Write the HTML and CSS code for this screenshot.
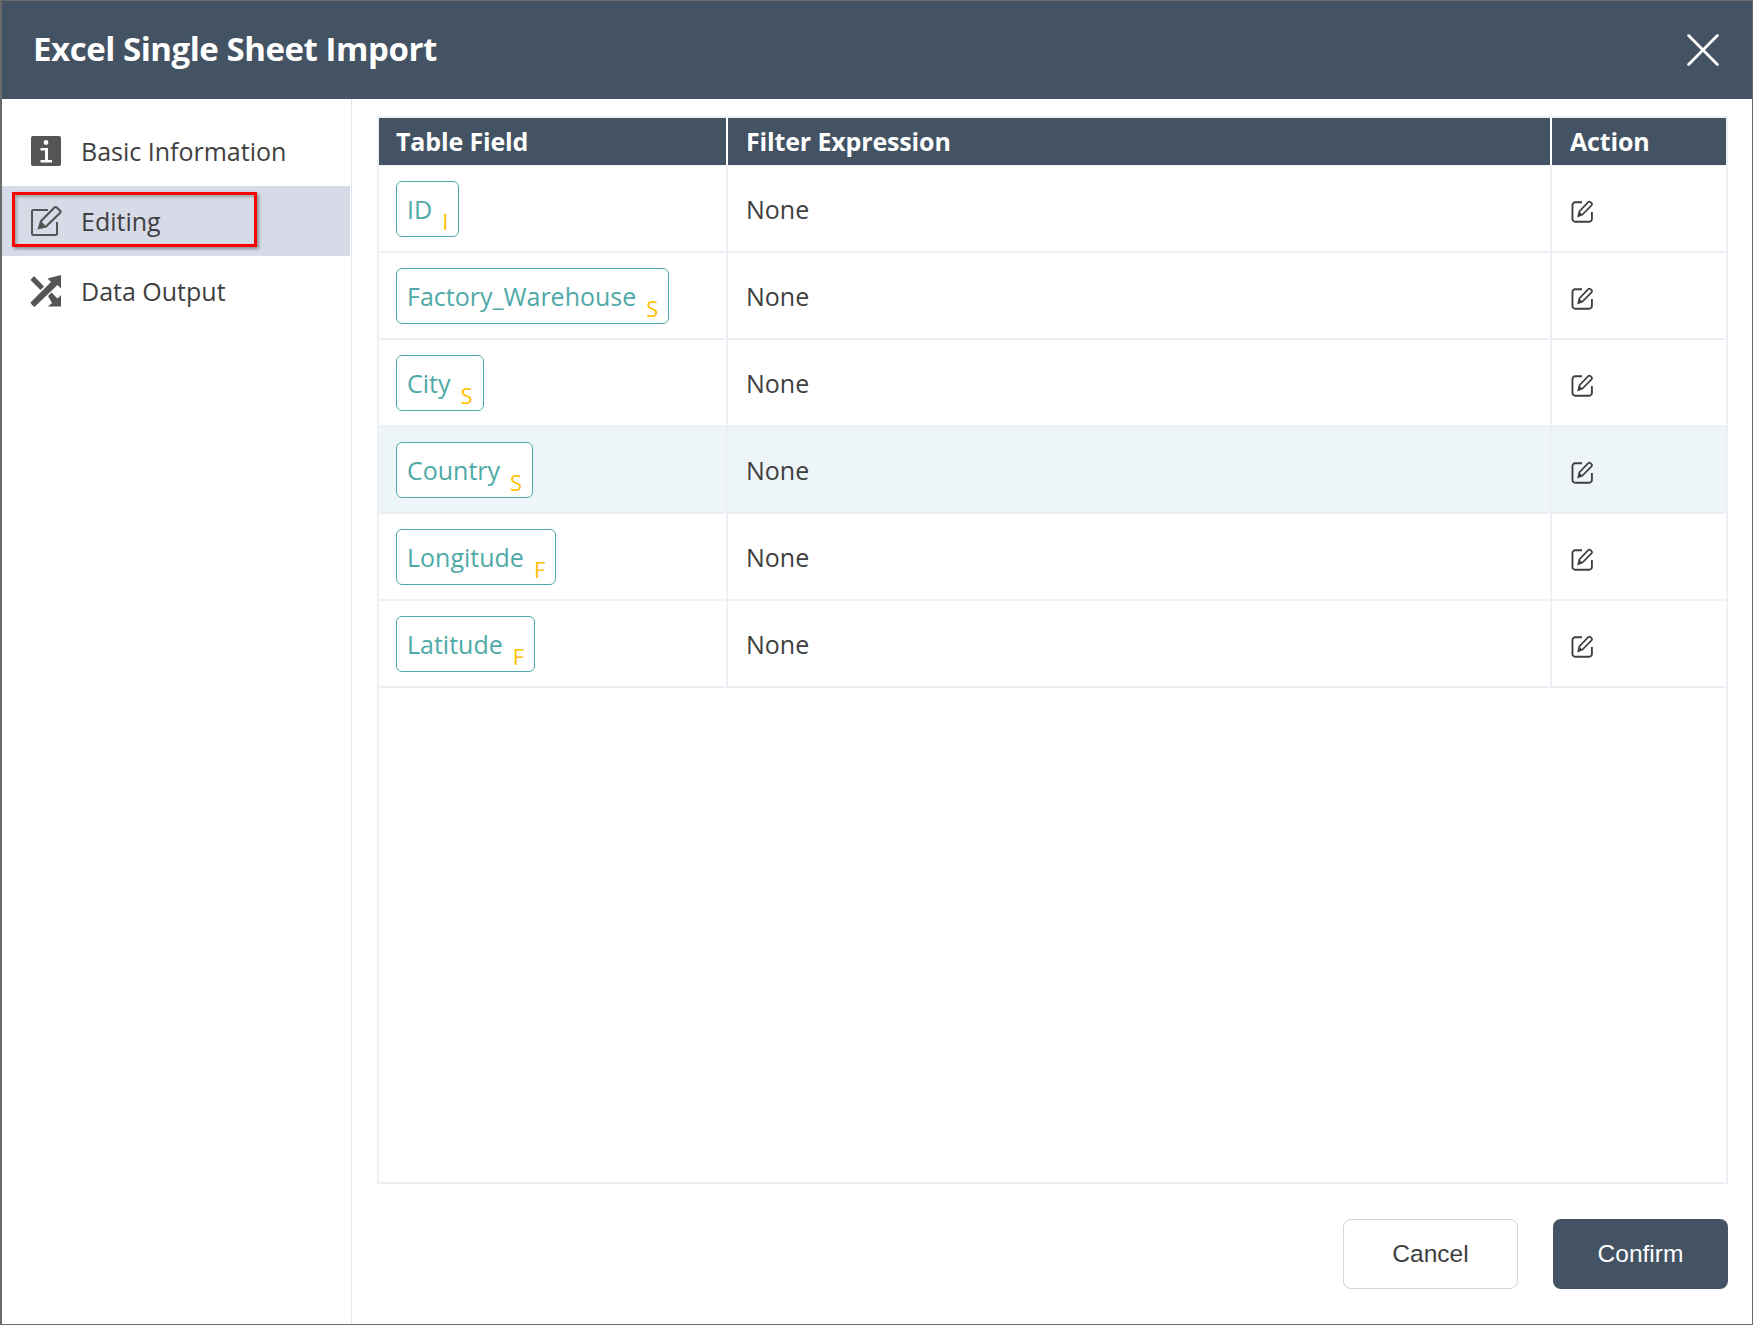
FILE: index.html
```html
<!DOCTYPE html>
<html lang="en">
<head>
    <meta charset="UTF-8">
    <title>Excel Single Sheet Import</title>
    <link rel="stylesheet" href="styles.css">
</head>
<body>
    <div class="dialog">
        <div class="dialog-header">
            <h1>Excel Single Sheet Import</h1>
            <svg class="close-icon" viewBox="0 0 30 30"><path d="M1.5 1.5L28.5 28.5M28.5 1.5L1.5 28.5"/></svg>
        </div>
        <div class="dialog-body">
            <!-- left menu -->
            <div class="sidebar">
                <div class="menu-item">
                    <svg class="menu-icon" viewBox="0 0 32 32"><rect x="1" y="1" width="30" height="30" rx="2" fill="#555"/><circle cx="16" cy="7.5" r="2.4" fill="#fff"/><path d="M10.5 13h7.5v12h4v2.6H10.5V25h4.500v-9.400h-4.500z" fill="#fff"/></svg>
                    <span>Basic Information</span>
                </div>
                <div class="menu-item active">
                    <svg class="menu-icon" viewBox="0 0 32 32"><path d="M18 5H3.500A1.500 1.500 0 0 0 2 6.500v22A1.500 1.500 0 0 0 3.500 30h22a1.500 1.500 0 0 0 1.500-1.500V17" fill="none" stroke="#555" stroke-width="2"/><path d="M9 23l2-7L24.500 2.500a1.600 1.600 0 0 1 2.300 0l3.200 3.200a1.600 1.600 0 0 1 0 2.300L16 21.500z" fill="none" stroke="#555" stroke-width="2.200"/><path d="M9 23l2-7 5 5.500z" fill="#555"/></svg>
                    <span>Editing</span>
                    <div class="highlight-box"></div>
                </div>
                <div class="menu-item">
                    <svg class="menu-icon" viewBox="0 0 32 32"><path d="M2 31l-1.500-2.500L21 8l-3.500-3.500L31 1v13.500L27.500 11 4.500 33z" fill="#555" transform="translate(0 -1)"/><path d="M4 1L.5 5l10 10 3.500-3.500zM18 21l3.500-3.500 6 6L31 20v11.500H18l4-3.500z" fill="#555"/></svg>
                    <span>Data Output</span>
                </div>
            </div>
            <div class="content">
                <div class="table-wrap">
                    <div class="table-row table-head">
                        <div class="col col-field">Table Field</div>
                        <div class="col col-filter">Filter Expression</div>
                        <div class="col col-action">Action</div>
                    </div>
                    <div class="table-row">
                        <div class="col col-field"><span class="tag">ID<sub>I</sub></span></div>
                        <div class="col col-filter">None</div>
                        <div class="col col-action"><svg class="edit-icon" viewBox="0 0 22 22"><use href="#edit"/></svg></div>
                    </div>
                    <div class="table-row">
                        <div class="col col-field"><span class="tag">Factory_Warehouse<sub>S</sub></span></div>
                        <div class="col col-filter">None</div>
                        <div class="col col-action"><svg class="edit-icon" viewBox="0 0 22 22"><use href="#edit"/></svg></div>
                    </div>
                    <div class="table-row">
                        <div class="col col-field"><span class="tag">City<sub>S</sub></span></div>
                        <div class="col col-filter">None</div>
                        <div class="col col-action"><svg class="edit-icon" viewBox="0 0 22 22"><use href="#edit"/></svg></div>
                    </div>
                    <div class="table-row hover">
                        <div class="col col-field"><span class="tag">Country<sub>S</sub></span></div>
                        <div class="col col-filter">None</div>
                        <div class="col col-action"><svg class="edit-icon" viewBox="0 0 22 22"><use href="#edit"/></svg></div>
                    </div>
                    <div class="table-row">
                        <div class="col col-field"><span class="tag">Longitude<sub>F</sub></span></div>
                        <div class="col col-filter">None</div>
                        <div class="col col-action"><svg class="edit-icon" viewBox="0 0 22 22"><use href="#edit"/></svg></div>
                    </div>
                    <div class="table-row">
                        <div class="col col-field"><span class="tag">Latitude<sub>F</sub></span></div>
                        <div class="col col-filter">None</div>
                        <div class="col col-action"><svg class="edit-icon" viewBox="0 0 22 22"><use href="#edit"/></svg></div>
                    </div>
                </div>
                <div class="footer">
                    <button class="btn btn-cancel">Cancel</button>
                    <button class="btn btn-confirm">Confirm</button>
                </div>
            </div>
        </div>
    </div>

    <svg class="icon-defs" width="0" height="0">
        <symbol id="edit" viewBox="0 0 22 22">
            <path d="M10.500 2.200H4A2.600 2.600 0 0 0 1.400 4.800v13.400a2.600 2.600 0 0 0 2.600 2.600h13.400a2.600 2.600 0 0 0 2.600-2.600V11.500" fill="none" stroke="#3f3f3f" stroke-width="1.800"/>
            <path d="M7 15.500l1-4.500L16.500 2a1.500 1.500 0 0 1 2.100 0l1 1a1.500 1.500 0 0 1 0 2.100L11 14z" fill="none" stroke="#3f3f3f" stroke-width="1.600"/>
            <path d="M7 15.500l1-4.500 3 3z" fill="#3f3f3f"/>
        </symbol>
    </svg>
</body>
</html>
```

FILE: styles.css
```css
* {
    margin: 0;
    padding: 0;
    box-sizing: border-box;
}

html, body {
    height: 100%;
}

body {
    font-family: "Open Sans", "Noto Sans", sans-serif;
    background: #6b6b6b;
    padding: 1px 1px 1px 2px;
    overflow: hidden;
}

.dialog {
    height: 100%;
    background: #fff;
    display: flex;
    flex-direction: column;
}

.dialog-header {
    height: 98px;
    flex-shrink: 0;
    background: #435364;
    color: #fff;
    display: flex;
    align-items: center;
    justify-content: space-between;
    padding: 0 33px 4px 31px;
}

.dialog-header h1 {
    font-size: 33px;
    font-weight: 700;
    letter-spacing: -0.45px;
}

.close-icon {
    width: 32px;
    height: 32px;
    margin-top: 4px;
}

.close-icon path {
    stroke: #fff;
    stroke-width: 2.6;
    stroke-linecap: round;
    fill: none;
}

.dialog-body {
    flex: 1;
    display: flex;
    min-height: 0;
}

.sidebar {
    width: 350px;
    flex-shrink: 0;
    border-right: 1px solid #e3e6ee;
    padding-top: 17px;
}

.menu-item {
    position: relative;
    height: 70px;
    width: 348px;
    display: flex;
    align-items: center;
    padding-left: 28px;
    font-size: 25px;
    color: #3f3f3f;
}

.menu-item.active {
    background: #d6dbe7;
}

.menu-icon {
    width: 32px;
    height: 32px;
    margin-right: 19px;
    flex-shrink: 0;
}

.highlight-box {
    position: absolute;
    left: 10px;
    top: 6px;
    width: 245px;
    height: 55px;
    border: 3px solid #f00;
    box-shadow: 2px 2px 3px rgba(0, 0, 0, 0.35), inset 2px 2px 3px rgba(0, 0, 0, 0.25);
}

.content {
    flex: 1;
    min-width: 0;
    padding: 17px 24px 0 25px;
    display: flex;
    flex-direction: column;
}

.table-wrap {
    height: 1068px;
    border: 2px solid #edf0f5;
}

.table-row {
    display: flex;
    height: 87px;
    border-bottom: 2px solid #edf0f5;
    font-size: 25px;
    color: #3f3f3f;
}

.table-row.hover {
    background: #edf5f9;
}

.table-row.table-head {
    height: 48px;
    border-bottom-width: 1px;
    background: #435364;
    color: #fff;
    font-weight: 700;
    letter-spacing: -0.15px;
}

.table-head .col {
    padding-bottom: 1px;
    border-right-color: #fff;
}

.col {
    display: flex;
    align-items: center;
    padding-left: 18px;
    border-right: 2px solid #edf0f5;
}

.col-field {
    width: 349px;
    padding-left: 17px;
}

.col-filter {
    width: 824px;
}

.col-action {
    flex: 1;
    border-right: 0;
}

.tag {
    display: inline-flex;
    height: 56px;
    align-items: center;
    padding: 0 10px;
    background: #fff;
    border: 1px solid #4fa9a7;
    border-radius: 6px;
    color: #4fa9a7;
}

.tag sub {
    align-self: flex-end;
    margin-left: 10px;
    font-size: 22px;
    line-height: 30px;
    color: #ffc000;
}

.edit-icon {
    width: 23px;
    height: 23px;
    margin: 6px 0 0 1px;
}

.footer {
    display: flex;
    justify-content: flex-end;
    gap: 35px;
    padding-top: 35px;
}

.btn {
    width: 175px;
    height: 70px;
    border-radius: 8px;
    font-family: "Liberation Sans", Arial, sans-serif;
    font-size: 24.500px;
}

.btn-cancel {
    background: #fff;
    border: 1px solid #d5d5d5;
    color: #3f3f3f;
}

.btn-confirm {
    background: #435364;
    border: 0;
    color: #fff;
}

.icon-defs {
    position: absolute;
}
```
